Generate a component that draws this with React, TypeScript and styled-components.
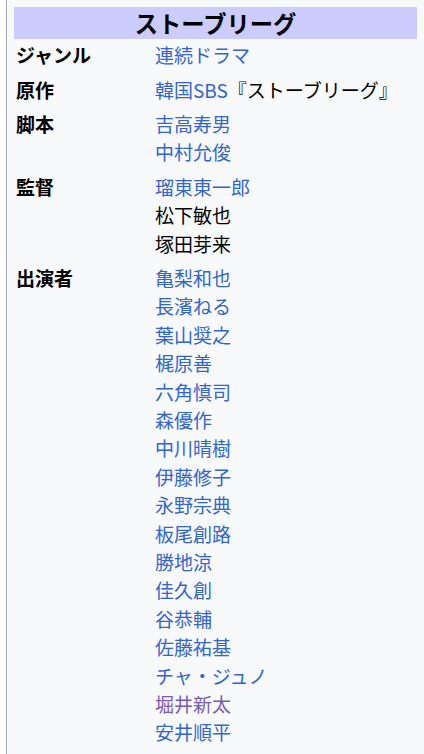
import React from 'react';
import styled, { createGlobalStyle } from 'styled-components';

type Person = { name: string; link?: boolean; visited?: boolean };

interface Row {
  label: string;
  values: Person[];
}

const rows: Row[] = [
  { label: 'ジャンル', values: [{ name: '連続ドラマ', link: true }] },
  { label: '原作', values: [{ name: '__source__' }] },
  {
    label: '脚本',
    values: [
      { name: '吉高寿男', link: true },
      { name: '中村允俊', link: true },
    ],
  },
  {
    label: '監督',
    values: [
      { name: '瑠東東一郎', link: true },
      { name: '松下敏也' },
      { name: '塚田芽来' },
    ],
  },
  {
    label: '出演者',
    values: [
      { name: '亀梨和也', link: true },
      { name: '長濱ねる', link: true },
      { name: '葉山奨之', link: true },
      { name: '梶原善', link: true },
      { name: '六角慎司', link: true },
      { name: '森優作', link: true },
      { name: '中川晴樹', link: true },
      { name: '伊藤修子', link: true },
      { name: '永野宗典', link: true },
      { name: '板尾創路', link: true },
      { name: '勝地涼', link: true },
      { name: '佳久創', link: true },
      { name: '谷恭輔', link: true },
      { name: '佐藤祐基', link: true },
      { name: 'チャ・ジュノ', link: true },
      { name: '堀井新太', link: true, visited: true },
      { name: '安井順平', link: true },
    ],
  },
];

const GlobalStyle = createGlobalStyle`
  body {
    margin: 0;
    background: #ffffff;
    font-family: "Noto Sans CJK JP", "Noto Sans", sans-serif;
    color: #202122;
  }
`;

const Infobox = styled.div`
  margin-left: 6px;
  border-left: 1px solid #a2a9b1;
  background: #f8f9fa;
  padding: 7px 7px 20px 7px;
  font-size: 19px;
  line-height: 28.4px;
`;

const Title = styled.div`
  background: #ccccff;
  height: 32px;
  line-height: 32px;
  text-align: center;
  font-weight: bold;
  font-size: 23.3px;
  color: #000;
`;

const InfoRow = styled.div`
  display: grid;
  grid-template-columns: 139px 1fr;
  padding: 2.2px 0 3.8px 2px;
`;

const Label = styled.div`
  font-weight: bold;
  color: #000;
`;

const Values = styled.div`
  display: flex;
  flex-direction: column;
`;

const Link = styled.a<{ $visited?: boolean }>`
  color: ${(p) => (p.$visited ? '#795cb2' : '#3366cc')};
  text-decoration: none;
`;

const Plain = styled.span`
  color: #000;
`;

function Value({ person }: { person: Person }) {
  if (person.name === '__source__') {
    return (
      <div>
        <Link href="#">韓国SBS</Link>
        <Plain>『ストーブリーグ』</Plain>
      </div>
    );
  }
  if (person.link) {
    return (
      <div>
        <Link href="#" $visited={person.visited}>
          {person.name}
        </Link>
      </div>
    );
  }
  return (
    <div>
      <Plain>{person.name}</Plain>
    </div>
  );
}

export default function App() {
  return (
    <>
      <GlobalStyle />
      <Infobox>
        <Title>ストーブリーグ</Title>
        {rows.map((row) => (
          <InfoRow key={row.label}>
            <Label>{row.label}</Label>
            <Values>
              {row.values.map((p) => (
                <Value key={p.name} person={p} />
              ))}
            </Values>
          </InfoRow>
        ))}
      </Infobox>
    </>
  );
}
